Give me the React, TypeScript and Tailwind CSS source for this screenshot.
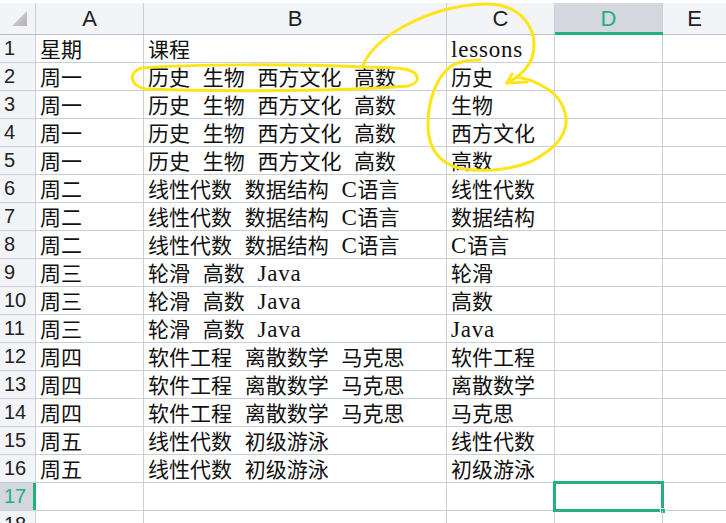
import type { ReactNode } from 'react'

const rows: [string, string, string][] = [
  ['星期', '课程', 'lessons'],
  ['周一', '历史 生物 西方文化 高数', '历史'],
  ['周一', '历史 生物 西方文化 高数', '生物'],
  ['周一', '历史 生物 西方文化 高数', '西方文化'],
  ['周一', '历史 生物 西方文化 高数', '高数'],
  ['周二', '线性代数 数据结构 C语言', '线性代数'],
  ['周二', '线性代数 数据结构 C语言', '数据结构'],
  ['周二', '线性代数 数据结构 C语言', 'C语言'],
  ['周三', '轮滑 高数 Java', '轮滑'],
  ['周三', '轮滑 高数 Java', '高数'],
  ['周三', '轮滑 高数 Java', 'Java'],
  ['周四', '软件工程 离散数学 马克思', '软件工程'],
  ['周四', '软件工程 离散数学 马克思', '离散数学'],
  ['周四', '软件工程 离散数学 马克思', '马克思'],
  ['周五', '线性代数 初级游泳', '线性代数'],
  ['周五', '线性代数 初级游泳', '初级游泳'],
  ['', '', ''],
  ['', '', ''],
]

// latin runs get a spaced serif, close to the half-width latin of a song font
function Txt({ text }: { text: string }) {
  const parts = text.split(/([A-Za-z]+)/)
  return (
    <>
      {parts.map((p, i) =>
        /[A-Za-z]/.test(p) ? (
          <span key={i} className="[font-family:'Liberation_Serif',serif] text-[23px] tracking-[0.8px]">
            {p}
          </span>
        ) : (
          <span key={i}>{p}</span>
        ),
      )}
    </>
  )
}

function Cell({ w, children }: { w: string; children?: ReactNode }) {
  return (
    <div className={`${w} shrink-0 h-full border-r border-[#c9cede] pl-[4px] whitespace-nowrap leading-[27px] [word-spacing:8px]`}>
      {children}
    </div>
  )
}

function Corner() {
  return (
    <div className="w-[36px] shrink-0 h-full border-r border-[#c9cede]">
      <svg width="35" height="31" viewBox="0 0 35 31">
        <defs>
          <linearGradient id="tri" x1="0" y1="0" x2="1" y2="1">
            <stop offset="0" stopColor="#d8d8d8" />
            <stop offset="1" stopColor="#b4b4b4" />
          </linearGradient>
        </defs>
        <polygon points="12,23 27,23 27,8" fill="url(#tri)" />
      </svg>
    </div>
  )
}

function Annotations() {
  return (
    <svg
      className="absolute inset-0 pointer-events-none"
      width="726"
      height="523"
      viewBox="0 0 726 523"
      fill="none"
      stroke="#ffe418"
      strokeWidth="3"
      strokeLinecap="round"
      strokeLinejoin="round"
    >
      {/* ellipse round B2 */}
      <path d="M363 67 C300 64 190 64 142 68 C128 71 129 86 146 89 C220 92 350 91 408 86 C421 83 421 72 404 69 C390 67 376 67 363 67" />
      {/* arc from B2 over C1 down to C2 */}
      <path d="M363 66 C372 38 428 6 484 4 C522 3 540 30 532 58 C527 71 517 78 507 83" />
      <path d="M507 83 L527 82" />
      <path d="M507 83 L512 74" />
      {/* loop round C2:C5 */}
      <path d="M480 60 C468 60 458 62 451 66 C436 78 428 100 428 125 C428 145 436 160 455 167 C475 172 505 172 530 162 C550 152 564 140 566 124 C567 108 558 95 546 88 C535 81 525 78 516 77" />
    </svg>
  )
}

export default function App() {
  return (
    <div className="relative w-full h-[523px] overflow-hidden bg-white pt-[3px] text-black">
      {/* column header */}
      <div className="flex h-[32px] border-b border-[#b7bfd2] bg-[#f3f4f7] [font-family:'Liberation_Sans',sans-serif] text-[22px] text-[#222]">
        <Corner />
        <div className="w-[108px] shrink-0 border-r border-[#c9cede] flex items-center justify-center">A</div>
        <div className="w-[303px] shrink-0 border-r border-[#c9cede] flex items-center justify-center">B</div>
        <div className="w-[108px] shrink-0 border-r border-[#c9cede] flex items-center justify-center">C</div>
        <div className="w-[108px] shrink-0 border-r border-[#c9cede] bg-[#d4d7dd] text-[#20b27a] flex items-center justify-center relative">
          D
          <div className="absolute left-0 right-[-1px] bottom-[-1px] h-[3px] bg-[#20b27a]" />
        </div>
        <div className="flex-1 flex items-center justify-center">E</div>
      </div>

      {rows.map((r, i) => {
        const n = i + 1
        const sel = n === 17
        return (
          <div key={i} className="flex h-[28px] border-b border-[#c9cede]">
            <div
              className={
                sel
                  ? "w-[36px] shrink-0 h-full bg-[#d4d7dd] border-r-[3px] border-[#20b27a] pl-[4px] leading-[27px] [font-family:'Liberation_Sans',sans-serif] text-[20px] text-[#20b27a]"
                  : "w-[36px] shrink-0 h-full bg-[#f3f4f7] border-r border-[#c9cede] pl-[4px] leading-[27px] [font-family:'Liberation_Sans',sans-serif] text-[20px] text-[#222]"
              }
            >
              {n}
            </div>
            <div className="flex h-full [font-family:'Noto_Sans_CJK_SC',sans-serif] text-[21px] text-[#111]">
              <Cell w="w-[108px]"><Txt text={r[0]} /></Cell>
              <Cell w="w-[303px]"><Txt text={r[1]} /></Cell>
              <Cell w="w-[108px]"><Txt text={r[2]} /></Cell>
              <div className="w-[108px] shrink-0 h-full border-r border-[#c9cede] relative">
                {sel && (
                  <div className="absolute left-[-2px] top-[-2px] right-[-2px] bottom-[-2px] border-[3px] border-[#20b27a]">
                    <div className="absolute right-[-5px] bottom-[-5px] w-[6px] h-[6px] bg-[#20b27a] border border-white" />
                  </div>
                )}
              </div>
            </div>
            <div className="flex-1" />
          </div>
        )
      })}

      <Annotations />
    </div>
  )
}
